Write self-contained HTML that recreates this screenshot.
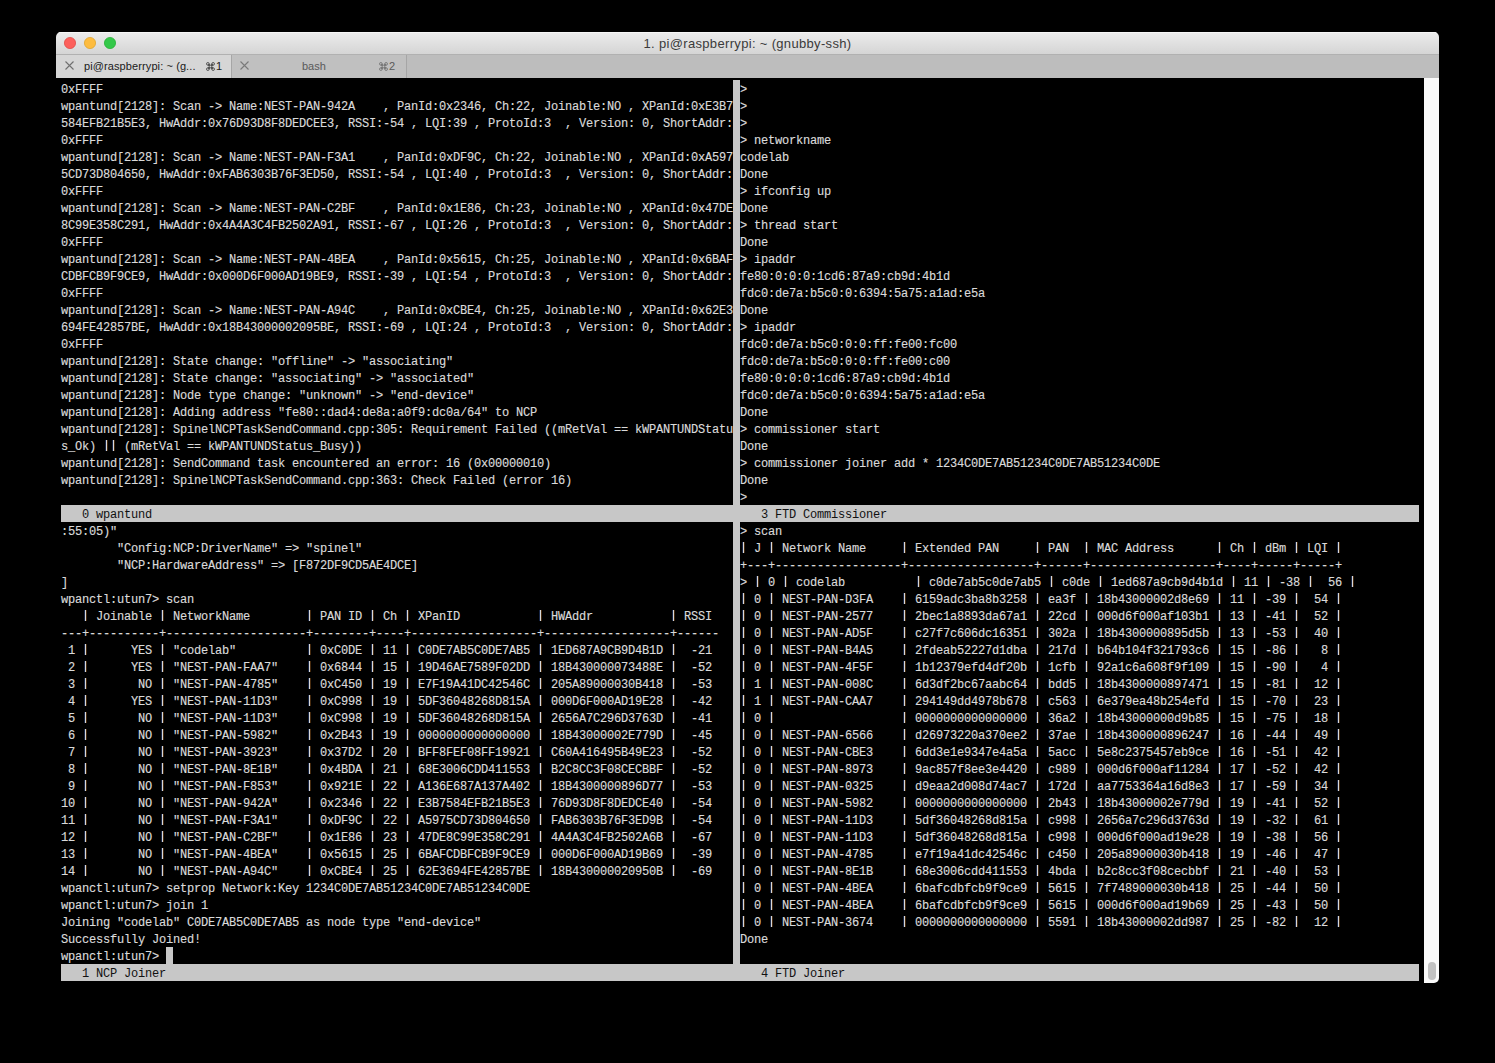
<!DOCTYPE html>
<html><head><meta charset="utf-8"><style>
html,body{margin:0;padding:0;width:1495px;height:1063px;background:#000;overflow:hidden}
#win{position:absolute;left:56px;top:32px;width:1383px;height:951px;background:#000;border-radius:5px 5px 0 0;overflow:hidden}
#title{position:absolute;left:0;top:0;width:1383px;height:22px;background:linear-gradient(#ececec,#d5d5d5);border-top:0}
#title .hl{position:absolute;left:0;top:0;width:100%;height:1px;background:#f6f6f6}
#title .txt{position:absolute;left:0;top:4px;width:1383px;text-align:center;font:13px/16px "Liberation Sans",sans-serif;letter-spacing:0.33px;color:#3a3a3a}
.dot{position:absolute;top:5px;width:10.6px;height:10.6px;border-radius:50%}
#tabs{position:absolute;left:0;top:22px;width:1383px;height:24px;background:#bdbdbd;border-top:1px solid #b1b1b1;box-sizing:border-box}
.tab{position:absolute;top:0;height:23px;font:11px/23px "Liberation Sans",sans-serif}
#term{position:absolute;left:0;top:46px;width:1383px;height:905px;background:#000}
#sbar{position:absolute;left:1368px;top:46px;width:15px;height:905px;background:#fafafa;border-bottom-right-radius:5px}
.t{position:absolute;font-family:"Liberation Mono",monospace;font-size:12px;letter-spacing:-0.2px;line-height:17px;white-space:pre;color:#dadada;-webkit-text-stroke:0.15px #dadada}
#bars i{position:absolute;width:1px;height:11px;background:#d8d8d8;box-shadow:-1px 0 0 rgba(70,110,200,.35),1px 0 0 rgba(200,120,40,.35)}
.s{color:#111;-webkit-text-stroke:0}
</style></head><body>
<div id="win">
 <div id="title"><div class="hl"></div>
  <svg width="80" height="22" style="position:absolute;left:0;top:0">
   <circle cx="14" cy="11" r="5.6" fill="#fc605c" stroke="#e0443e" stroke-width="0.7"/>
   <circle cx="34" cy="11" r="5.6" fill="#fdbc40" stroke="#dea123" stroke-width="0.7"/>
   <circle cx="54" cy="11" r="5.6" fill="#34c84a" stroke="#1dad2b" stroke-width="0.7"/>
  </svg>
  <div class="txt">1. pi@raspberrypi: ~ (gnubby-ssh)</div>
 </div>
 <div id="tabs">
  <div class="tab" style="left:0;width:176px;background:#d6d6d6;border-right:1px solid #a6a6a6;box-sizing:border-box">
   <svg width="9" height="9" viewBox="0 0 9 9" style="position:absolute;left:9px;top:6px"><path d="M0.5 0.5L8.5 8.5M8.5 0.5L0.5 8.5" stroke="#707070" stroke-width="1.1" fill="none"/></svg>
   <span style="position:absolute;left:28px;color:#1a1a1a;letter-spacing:0.1px">pi@raspberrypi: ~ (g...</span>
   <svg width="9" height="9" viewBox="-0.6 -0.6 10.2 10.2" style="position:absolute;left:150px;top:7px"><g fill="none" stroke="#222" stroke-width="0.8"><path d="M3 1.5V7.5M6 1.5V7.5M1.5 3H7.5M1.5 6H7.5"/><circle cx="1.5" cy="1.5" r="1.5"/><circle cx="7.5" cy="1.5" r="1.5"/><circle cx="1.5" cy="7.5" r="1.5"/><circle cx="7.5" cy="7.5" r="1.5"/></g></svg>
   <span style="position:absolute;left:160px;color:#1a1a1a">1</span>
  </div>
  <div class="tab" style="left:176px;width:175px;background:#c0c0c0;border-right:1px solid #a6a6a6;box-sizing:border-box">
   <svg width="9" height="9" viewBox="0 0 9 9" style="position:absolute;left:8px;top:6px"><path d="M0.5 0.5L8.5 8.5M8.5 0.5L0.5 8.5" stroke="#7a7a7a" stroke-width="1.1" fill="none"/></svg>
   <span style="position:absolute;left:70px;color:#5a5a5a">bash</span>
   <svg width="9" height="9" viewBox="-0.6 -0.6 10.2 10.2" style="position:absolute;left:147px;top:7px"><g fill="none" stroke="#5f5f5f" stroke-width="0.8"><path d="M3 1.5V7.5M6 1.5V7.5M1.5 3H7.5M1.5 6H7.5"/><circle cx="1.5" cy="1.5" r="1.5"/><circle cx="7.5" cy="1.5" r="1.5"/><circle cx="1.5" cy="7.5" r="1.5"/><circle cx="7.5" cy="7.5" r="1.5"/></g></svg>
   <span style="position:absolute;left:157px;color:#5a5a5a">2</span>
  </div>
 </div>
 <div id="term">
 </div>
 <div id="sbar"><div style="position:absolute;left:4px;top:884px;width:8px;height:18px;border-radius:4px;background:#c2c2c2"></div></div>
 <div class="t" style="left:5px;top:50px">0xFFFF
wpantund[2128]: Scan -&gt; Name:NEST-PAN-942A    , PanId:0x2346, Ch:22, Joinable:NO , XPanId:0xE3B7
584EFB21B5E3, HwAddr:0x76D93D8F8DEDCEE3, RSSI:-54 , LQI:39 , ProtoId:3  , Version: 0, ShortAddr:
0xFFFF
wpantund[2128]: Scan -&gt; Name:NEST-PAN-F3A1    , PanId:0xDF9C, Ch:22, Joinable:NO , XPanId:0xA597
5CD73D804650, HwAddr:0xFAB6303B76F3ED50, RSSI:-54 , LQI:40 , ProtoId:3  , Version: 0, ShortAddr:
0xFFFF
wpantund[2128]: Scan -&gt; Name:NEST-PAN-C2BF    , PanId:0x1E86, Ch:23, Joinable:NO , XPanId:0x47DE
8C99E358C291, HwAddr:0x4A4A3C4FB2502A91, RSSI:-67 , LQI:26 , ProtoId:3  , Version: 0, ShortAddr:
0xFFFF
wpantund[2128]: Scan -&gt; Name:NEST-PAN-4BEA    , PanId:0x5615, Ch:25, Joinable:NO , XPanId:0x6BAF
CDBFCB9F9CE9, HwAddr:0x000D6F000AD19BE9, RSSI:-39 , LQI:54 , ProtoId:3  , Version: 0, ShortAddr:
0xFFFF
wpantund[2128]: Scan -&gt; Name:NEST-PAN-A94C    , PanId:0xCBE4, Ch:25, Joinable:NO , XPanId:0x62E3
694FE42857BE, HwAddr:0x18B43000002095BE, RSSI:-69 , LQI:24 , ProtoId:3  , Version: 0, ShortAddr:
0xFFFF
wpantund[2128]: State change: "offline" -&gt; "associating"
wpantund[2128]: State change: "associating" -&gt; "associated"
wpantund[2128]: Node type change: "unknown" -&gt; "end-device"
wpantund[2128]: Adding address "fe80::dad4:de8a:a0f9:dc0a/64" to NCP
wpantund[2128]: SpinelNCPTaskSendCommand.cpp:305: Requirement Failed ((mRetVal == kWPANTUNDStatu
s_Ok)    (mRetVal == kWPANTUNDStatus_Busy))
wpantund[2128]: SendCommand task encountered an error: 16 (0x00000010)
wpantund[2128]: SpinelNCPTaskSendCommand.cpp:363: Check Failed (error 16)
</div>
<div class="t" style="left:684px;top:50px">&gt;
&gt;
&gt;
&gt; networkname
codelab
Done
&gt; ifconfig up
Done
&gt; thread start
Done
&gt; ipaddr
fe80:0:0:0:1cd6:87a9:cb9d:4b1d
fdc0:de7a:b5c0:0:6394:5a75:a1ad:e5a
Done
&gt; ipaddr
fdc0:de7a:b5c0:0:0:ff:fe00:fc00
fdc0:de7a:b5c0:0:0:ff:fe00:c00
fe80:0:0:0:1cd6:87a9:cb9d:4b1d
fdc0:de7a:b5c0:0:6394:5a75:a1ad:e5a
Done
&gt; commissioner start
Done
&gt; commissioner joiner add * 1234C0DE7AB51234C0DE7AB51234C0DE
Done
&gt;</div>
<div class="t" style="left:5px;top:492px">:55:05)"
        "Config:NCP:DriverName" =&gt; "spinel"
        "NCP:HardwareAddress" =&gt; [F872DF9CD5AE4DCE]
]
wpanctl:utun7&gt; scan
     Joinable   NetworkName          PAN ID   Ch   XPanID             HWAddr             RSSI
---+----------+--------------------+--------+----+------------------+------------------+------
 1        YES   "codelab"            0xC0DE   11   C0DE7AB5C0DE7AB5   1ED687A9CB9D4B1D    -21
 2        YES   "NEST-PAN-FAA7"      0x6844   15   19D46AE7589F02DD   18B430000073488E    -52
 3         NO   "NEST-PAN-4785"      0xC450   19   E7F19A41DC42546C   205A89000030B418    -53
 4        YES   "NEST-PAN-11D3"      0xC998   19   5DF36048268D815A   000D6F000AD19E28    -42
 5         NO   "NEST-PAN-11D3"      0xC998   19   5DF36048268D815A   2656A7C296D3763D    -41
 6         NO   "NEST-PAN-5982"      0x2B43   19   0000000000000000   18B43000002E779D    -45
 7         NO   "NEST-PAN-3923"      0x37D2   20   BFF8FEF08FF19921   C60A416495B49E23    -52
 8         NO   "NEST-PAN-8E1B"      0x4BDA   21   68E3006CDD411553   B2C8CC3F08CECBBF    -52
 9         NO   "NEST-PAN-F853"      0x921E   22   A136E687A137A402   18B4300000896D77    -53
10         NO   "NEST-PAN-942A"      0x2346   22   E3B7584EFB21B5E3   76D93D8F8DEDCE40    -54
11         NO   "NEST-PAN-F3A1"      0xDF9C   22   A5975CD73D804650   FAB6303B76F3ED9B    -54
12         NO   "NEST-PAN-C2BF"      0x1E86   23   47DE8C99E358C291   4A4A3C4FB2502A6B    -67
13         NO   "NEST-PAN-4BEA"      0x5615   25   6BAFCDBFCB9F9CE9   000D6F000AD19B69    -39
14         NO   "NEST-PAN-A94C"      0xCBE4   25   62E3694FE42857BE   18B430000020950B    -69
wpanctl:utun7&gt; setprop Network:Key 1234C0DE7AB51234C0DE7AB51234C0DE
wpanctl:utun7&gt; join 1
Joining "codelab" C0DE7AB5C0DE7AB5 as node type "end-device"
Successfully Joined!
wpanctl:utun7&gt; </div>
<div class="t" style="left:684px;top:492px">&gt; scan
  J   Network Name       Extended PAN       PAN    MAC Address        Ch   dBm   LQI  
+---+------------------+------------------+------+------------------+----+-----+-----+
&gt;   0   codelab            c0de7ab5c0de7ab5   c0de   1ed687a9cb9d4b1d   11   -38    56  
  0   NEST-PAN-D3FA      6159adc3ba8b3258   ea3f   18b43000002d8e69   11   -39    54  
  0   NEST-PAN-2577      2bec1a8893da67a1   22cd   000d6f000af103b1   13   -41    52  
  0   NEST-PAN-AD5F      c27f7c606dc16351   302a   18b4300000895d5b   13   -53    40  
  0   NEST-PAN-B4A5      2fdeab52227d1dba   217d   b64b104f321793c6   15   -86     8  
  0   NEST-PAN-4F5F      1b12379efd4df20b   1cfb   92a1c6a608f9f109   15   -90     4  
  1   NEST-PAN-008C      6d3df2bc67aabc64   bdd5   18b4300000897471   15   -81    12  
  1   NEST-PAN-CAA7      294149dd4978b678   c563   6e379ea48b254efd   15   -70    23  
  0                      0000000000000000   36a2   18b43000000d9b85   15   -75    18  
  0   NEST-PAN-6566      d26973220a370ee2   37ae   18b4300000896247   16   -44    49  
  0   NEST-PAN-CBE3      6dd3e1e9347e4a5a   5acc   5e8c2375457eb9ce   16   -51    42  
  0   NEST-PAN-8973      9ac857f8ee3e4420   c989   000d6f000af11284   17   -52    42  
  0   NEST-PAN-0325      d9eaa2d008d74ac7   172d   aa7753364a16d8e3   17   -59    34  
  0   NEST-PAN-5982      0000000000000000   2b43   18b43000002e779d   19   -41    52  
  0   NEST-PAN-11D3      5df36048268d815a   c998   2656a7c296d3763d   19   -32    61  
  0   NEST-PAN-11D3      5df36048268d815a   c998   000d6f000ad19e28   19   -38    56  
  0   NEST-PAN-4785      e7f19a41dc42546c   c450   205a89000030b418   19   -46    47  
  0   NEST-PAN-8E1B      68e3006cdd411553   4bda   b2c8cc3f08cecbbf   21   -40    53  
  0   NEST-PAN-4BEA      6bafcdbfcb9f9ce9   5615   7f7489000030b418   25   -44    50  
  0   NEST-PAN-4BEA      6bafcdbfcb9f9ce9   5615   000d6f000ad19b69   25   -43    50  
  0   NEST-PAN-3674      0000000000000000   5591   18b43000002dd987   25   -82    12  
Done
</div>
<div style="position:absolute;left:5px;top:473px;width:1358px;height:17px;background:#c7c7c7;"></div>
<div style="position:absolute;left:5px;top:932px;width:1358px;height:17px;background:#c7c7c7;"></div>
<div style="position:absolute;left:677px;top:48px;width:7px;height:425px;background:#c7c7c7;"></div>
<div style="position:absolute;left:677px;top:490px;width:7px;height:442px;background:#c7c7c7;"></div>
<div style="position:absolute;left:110px;top:915px;width:7px;height:17px;background:#c7c7c7;"></div>
<div class="t s" style="left:5px;top:475px">   0 wpantund</div>
<div class="t s" style="left:684px;top:475px">   3 FTD Commissioner</div>
<div class="t s" style="left:5px;top:934px">   1 NCP Joiner</div>
<div class="t s" style="left:684px;top:934px">   4 FTD Joiner</div>
<div id="bars"><i style="left:50px;top:408px"></i><i style="left:57px;top:408px"></i><i style="left:29px;top:578px"></i><i style="left:106px;top:578px"></i><i style="left:253px;top:578px"></i><i style="left:316px;top:578px"></i><i style="left:351px;top:578px"></i><i style="left:484px;top:578px"></i><i style="left:617px;top:578px"></i><i style="left:29px;top:612px"></i><i style="left:106px;top:612px"></i><i style="left:253px;top:612px"></i><i style="left:316px;top:612px"></i><i style="left:351px;top:612px"></i><i style="left:484px;top:612px"></i><i style="left:617px;top:612px"></i><i style="left:29px;top:629px"></i><i style="left:106px;top:629px"></i><i style="left:253px;top:629px"></i><i style="left:316px;top:629px"></i><i style="left:351px;top:629px"></i><i style="left:484px;top:629px"></i><i style="left:617px;top:629px"></i><i style="left:29px;top:646px"></i><i style="left:106px;top:646px"></i><i style="left:253px;top:646px"></i><i style="left:316px;top:646px"></i><i style="left:351px;top:646px"></i><i style="left:484px;top:646px"></i><i style="left:617px;top:646px"></i><i style="left:29px;top:663px"></i><i style="left:106px;top:663px"></i><i style="left:253px;top:663px"></i><i style="left:316px;top:663px"></i><i style="left:351px;top:663px"></i><i style="left:484px;top:663px"></i><i style="left:617px;top:663px"></i><i style="left:29px;top:680px"></i><i style="left:106px;top:680px"></i><i style="left:253px;top:680px"></i><i style="left:316px;top:680px"></i><i style="left:351px;top:680px"></i><i style="left:484px;top:680px"></i><i style="left:617px;top:680px"></i><i style="left:29px;top:697px"></i><i style="left:106px;top:697px"></i><i style="left:253px;top:697px"></i><i style="left:316px;top:697px"></i><i style="left:351px;top:697px"></i><i style="left:484px;top:697px"></i><i style="left:617px;top:697px"></i><i style="left:29px;top:714px"></i><i style="left:106px;top:714px"></i><i style="left:253px;top:714px"></i><i style="left:316px;top:714px"></i><i style="left:351px;top:714px"></i><i style="left:484px;top:714px"></i><i style="left:617px;top:714px"></i><i style="left:29px;top:731px"></i><i style="left:106px;top:731px"></i><i style="left:253px;top:731px"></i><i style="left:316px;top:731px"></i><i style="left:351px;top:731px"></i><i style="left:484px;top:731px"></i><i style="left:617px;top:731px"></i><i style="left:29px;top:748px"></i><i style="left:106px;top:748px"></i><i style="left:253px;top:748px"></i><i style="left:316px;top:748px"></i><i style="left:351px;top:748px"></i><i style="left:484px;top:748px"></i><i style="left:617px;top:748px"></i><i style="left:29px;top:765px"></i><i style="left:106px;top:765px"></i><i style="left:253px;top:765px"></i><i style="left:316px;top:765px"></i><i style="left:351px;top:765px"></i><i style="left:484px;top:765px"></i><i style="left:617px;top:765px"></i><i style="left:29px;top:782px"></i><i style="left:106px;top:782px"></i><i style="left:253px;top:782px"></i><i style="left:316px;top:782px"></i><i style="left:351px;top:782px"></i><i style="left:484px;top:782px"></i><i style="left:617px;top:782px"></i><i style="left:29px;top:799px"></i><i style="left:106px;top:799px"></i><i style="left:253px;top:799px"></i><i style="left:316px;top:799px"></i><i style="left:351px;top:799px"></i><i style="left:484px;top:799px"></i><i style="left:617px;top:799px"></i><i style="left:29px;top:816px"></i><i style="left:106px;top:816px"></i><i style="left:253px;top:816px"></i><i style="left:316px;top:816px"></i><i style="left:351px;top:816px"></i><i style="left:484px;top:816px"></i><i style="left:617px;top:816px"></i><i style="left:29px;top:833px"></i><i style="left:106px;top:833px"></i><i style="left:253px;top:833px"></i><i style="left:316px;top:833px"></i><i style="left:351px;top:833px"></i><i style="left:484px;top:833px"></i><i style="left:617px;top:833px"></i><i style="left:687px;top:510px"></i><i style="left:715px;top:510px"></i><i style="left:848px;top:510px"></i><i style="left:981px;top:510px"></i><i style="left:1030px;top:510px"></i><i style="left:1163px;top:510px"></i><i style="left:1198px;top:510px"></i><i style="left:1240px;top:510px"></i><i style="left:1282px;top:510px"></i><i style="left:701px;top:544px"></i><i style="left:729px;top:544px"></i><i style="left:862px;top:544px"></i><i style="left:995px;top:544px"></i><i style="left:1044px;top:544px"></i><i style="left:1177px;top:544px"></i><i style="left:1212px;top:544px"></i><i style="left:1254px;top:544px"></i><i style="left:1296px;top:544px"></i><i style="left:687px;top:561px"></i><i style="left:715px;top:561px"></i><i style="left:848px;top:561px"></i><i style="left:981px;top:561px"></i><i style="left:1030px;top:561px"></i><i style="left:1163px;top:561px"></i><i style="left:1198px;top:561px"></i><i style="left:1240px;top:561px"></i><i style="left:1282px;top:561px"></i><i style="left:687px;top:578px"></i><i style="left:715px;top:578px"></i><i style="left:848px;top:578px"></i><i style="left:981px;top:578px"></i><i style="left:1030px;top:578px"></i><i style="left:1163px;top:578px"></i><i style="left:1198px;top:578px"></i><i style="left:1240px;top:578px"></i><i style="left:1282px;top:578px"></i><i style="left:687px;top:595px"></i><i style="left:715px;top:595px"></i><i style="left:848px;top:595px"></i><i style="left:981px;top:595px"></i><i style="left:1030px;top:595px"></i><i style="left:1163px;top:595px"></i><i style="left:1198px;top:595px"></i><i style="left:1240px;top:595px"></i><i style="left:1282px;top:595px"></i><i style="left:687px;top:612px"></i><i style="left:715px;top:612px"></i><i style="left:848px;top:612px"></i><i style="left:981px;top:612px"></i><i style="left:1030px;top:612px"></i><i style="left:1163px;top:612px"></i><i style="left:1198px;top:612px"></i><i style="left:1240px;top:612px"></i><i style="left:1282px;top:612px"></i><i style="left:687px;top:629px"></i><i style="left:715px;top:629px"></i><i style="left:848px;top:629px"></i><i style="left:981px;top:629px"></i><i style="left:1030px;top:629px"></i><i style="left:1163px;top:629px"></i><i style="left:1198px;top:629px"></i><i style="left:1240px;top:629px"></i><i style="left:1282px;top:629px"></i><i style="left:687px;top:646px"></i><i style="left:715px;top:646px"></i><i style="left:848px;top:646px"></i><i style="left:981px;top:646px"></i><i style="left:1030px;top:646px"></i><i style="left:1163px;top:646px"></i><i style="left:1198px;top:646px"></i><i style="left:1240px;top:646px"></i><i style="left:1282px;top:646px"></i><i style="left:687px;top:663px"></i><i style="left:715px;top:663px"></i><i style="left:848px;top:663px"></i><i style="left:981px;top:663px"></i><i style="left:1030px;top:663px"></i><i style="left:1163px;top:663px"></i><i style="left:1198px;top:663px"></i><i style="left:1240px;top:663px"></i><i style="left:1282px;top:663px"></i><i style="left:687px;top:680px"></i><i style="left:715px;top:680px"></i><i style="left:848px;top:680px"></i><i style="left:981px;top:680px"></i><i style="left:1030px;top:680px"></i><i style="left:1163px;top:680px"></i><i style="left:1198px;top:680px"></i><i style="left:1240px;top:680px"></i><i style="left:1282px;top:680px"></i><i style="left:687px;top:697px"></i><i style="left:715px;top:697px"></i><i style="left:848px;top:697px"></i><i style="left:981px;top:697px"></i><i style="left:1030px;top:697px"></i><i style="left:1163px;top:697px"></i><i style="left:1198px;top:697px"></i><i style="left:1240px;top:697px"></i><i style="left:1282px;top:697px"></i><i style="left:687px;top:714px"></i><i style="left:715px;top:714px"></i><i style="left:848px;top:714px"></i><i style="left:981px;top:714px"></i><i style="left:1030px;top:714px"></i><i style="left:1163px;top:714px"></i><i style="left:1198px;top:714px"></i><i style="left:1240px;top:714px"></i><i style="left:1282px;top:714px"></i><i style="left:687px;top:731px"></i><i style="left:715px;top:731px"></i><i style="left:848px;top:731px"></i><i style="left:981px;top:731px"></i><i style="left:1030px;top:731px"></i><i style="left:1163px;top:731px"></i><i style="left:1198px;top:731px"></i><i style="left:1240px;top:731px"></i><i style="left:1282px;top:731px"></i><i style="left:687px;top:748px"></i><i style="left:715px;top:748px"></i><i style="left:848px;top:748px"></i><i style="left:981px;top:748px"></i><i style="left:1030px;top:748px"></i><i style="left:1163px;top:748px"></i><i style="left:1198px;top:748px"></i><i style="left:1240px;top:748px"></i><i style="left:1282px;top:748px"></i><i style="left:687px;top:765px"></i><i style="left:715px;top:765px"></i><i style="left:848px;top:765px"></i><i style="left:981px;top:765px"></i><i style="left:1030px;top:765px"></i><i style="left:1163px;top:765px"></i><i style="left:1198px;top:765px"></i><i style="left:1240px;top:765px"></i><i style="left:1282px;top:765px"></i><i style="left:687px;top:782px"></i><i style="left:715px;top:782px"></i><i style="left:848px;top:782px"></i><i style="left:981px;top:782px"></i><i style="left:1030px;top:782px"></i><i style="left:1163px;top:782px"></i><i style="left:1198px;top:782px"></i><i style="left:1240px;top:782px"></i><i style="left:1282px;top:782px"></i><i style="left:687px;top:799px"></i><i style="left:715px;top:799px"></i><i style="left:848px;top:799px"></i><i style="left:981px;top:799px"></i><i style="left:1030px;top:799px"></i><i style="left:1163px;top:799px"></i><i style="left:1198px;top:799px"></i><i style="left:1240px;top:799px"></i><i style="left:1282px;top:799px"></i><i style="left:687px;top:816px"></i><i style="left:715px;top:816px"></i><i style="left:848px;top:816px"></i><i style="left:981px;top:816px"></i><i style="left:1030px;top:816px"></i><i style="left:1163px;top:816px"></i><i style="left:1198px;top:816px"></i><i style="left:1240px;top:816px"></i><i style="left:1282px;top:816px"></i><i style="left:687px;top:833px"></i><i style="left:715px;top:833px"></i><i style="left:848px;top:833px"></i><i style="left:981px;top:833px"></i><i style="left:1030px;top:833px"></i><i style="left:1163px;top:833px"></i><i style="left:1198px;top:833px"></i><i style="left:1240px;top:833px"></i><i style="left:1282px;top:833px"></i><i style="left:687px;top:850px"></i><i style="left:715px;top:850px"></i><i style="left:848px;top:850px"></i><i style="left:981px;top:850px"></i><i style="left:1030px;top:850px"></i><i style="left:1163px;top:850px"></i><i style="left:1198px;top:850px"></i><i style="left:1240px;top:850px"></i><i style="left:1282px;top:850px"></i><i style="left:687px;top:867px"></i><i style="left:715px;top:867px"></i><i style="left:848px;top:867px"></i><i style="left:981px;top:867px"></i><i style="left:1030px;top:867px"></i><i style="left:1163px;top:867px"></i><i style="left:1198px;top:867px"></i><i style="left:1240px;top:867px"></i><i style="left:1282px;top:867px"></i><i style="left:687px;top:884px"></i><i style="left:715px;top:884px"></i><i style="left:848px;top:884px"></i><i style="left:981px;top:884px"></i><i style="left:1030px;top:884px"></i><i style="left:1163px;top:884px"></i><i style="left:1198px;top:884px"></i><i style="left:1240px;top:884px"></i><i style="left:1282px;top:884px"></i></div>
</div>
</body></html>
